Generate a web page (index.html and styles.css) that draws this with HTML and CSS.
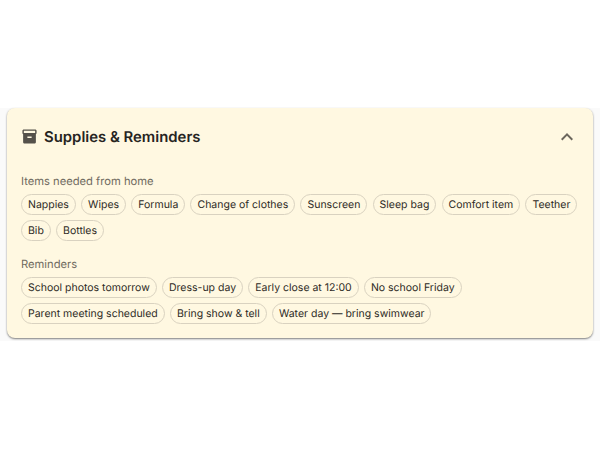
FILE: index.html
```html
<!DOCTYPE html>
<html lang="en">
<head>
    <meta charset="UTF-8">
    <title>Supplies &amp; Reminders</title>
    <link rel="stylesheet" href="styles.css">
</head>
<body>
    <div class="strip">
        <div class="card">
            <div class="card-header">
                <svg class="icon-box" width="17" height="17" viewBox="0 0 24 24"><path d="M20 2H4c-1 0-2 .9-2 2v3.01c0 .72.43 1.34 1 1.69V20c0 1.1 1.1 2 2 2h14c.9 0 2-.9 2-2V8.7c.57-.35 1-.97 1-1.69V4c0-1.1-1-2-2-2zm-5 12H9v-2h6v2zm5-7H4V4l16-.02V7z"/></svg>
                <h2>Supplies &amp; Reminders</h2>
                <svg class="icon-chevron" width="24" height="24" viewBox="0 0 24 24"><path d="M7.41 15.41 12 10.83l4.59 4.58L18 14l-6-6-6 6z"/></svg>
            </div>

            <div class="section">
                <div class="section-label">Items needed from home</div>
                <div class="chips">
                    <span class="chip">Nappies</span>
                    <span class="chip">Wipes</span>
                    <span class="chip">Formula</span>
                    <span class="chip">Change of clothes</span>
                    <span class="chip">Sunscreen</span>
                    <span class="chip">Sleep bag</span>
                    <span class="chip">Comfort item</span>
                    <span class="chip">Teether</span>
                    <span class="chip">Bib</span>
                    <span class="chip">Bottles</span>
                </div>
            </div>

            <div class="section">
                <div class="section-label">Reminders</div>
                <div class="chips">
                    <span class="chip">School photos tomorrow</span>
                    <span class="chip">Dress-up day</span>
                    <span class="chip">Early close at 12:00</span>
                    <span class="chip">No school Friday</span>
                    <span class="chip">Parent meeting scheduled</span>
                    <span class="chip">Bring show &amp; tell</span>
                    <span class="chip">Water day — bring swimwear</span>
                </div>
            </div>
        </div>
    </div>
</body>
</html>
```

FILE: styles.css
```css
body {
    margin: 0;
    height: 450px;
    overflow: hidden;
    background-color: #fff;
    font-family: Inter, "Liberation Sans", sans-serif;
    text-rendering: geometricPrecision;
}
.strip {
    margin-top: 108px;
    padding: 0 7px 3px;
    background-color: #fafafa;
}
.card {
    height: 230px;
    box-sizing: border-box;
    padding: 0 14px;
    background-color: #fff8e1;
    border-radius: 8px;
    box-shadow: 0 1px 2px rgba(0, 0, 0, 0.5);
}
.card-header {
    display: flex;
    align-items: center;
    height: 57px;
    box-sizing: border-box;
}
.card-header h2 {
    flex: 1;
    margin: 0 0 0 6px;
    font-size: 14.9px;
    font-weight: 600;
    color: #26241f;
}
.icon-box {
    fill: #55514a;
}
.icon-chevron {
    fill: #6b665c;
}
.section {
    margin-top: 8px;
}
.section + .section {
    margin-top: 15px;
}
.section-label {
    font-size: 11.2px;
    line-height: 16px;
    color: #6f6a60;
    margin-bottom: 5px;
}
.chips {
    display: flex;
    flex-wrap: wrap;
    gap: 5px 5.2px;
}
.chip {
    box-sizing: border-box;
    height: 21px;
    padding: 0 6px;
    border: 1px solid #d9d2c0;
    border-radius: 11px;
    font-size: 10.5px;
    line-height: 19px;
    color: #2e2b26;
    white-space: nowrap;
}
```
